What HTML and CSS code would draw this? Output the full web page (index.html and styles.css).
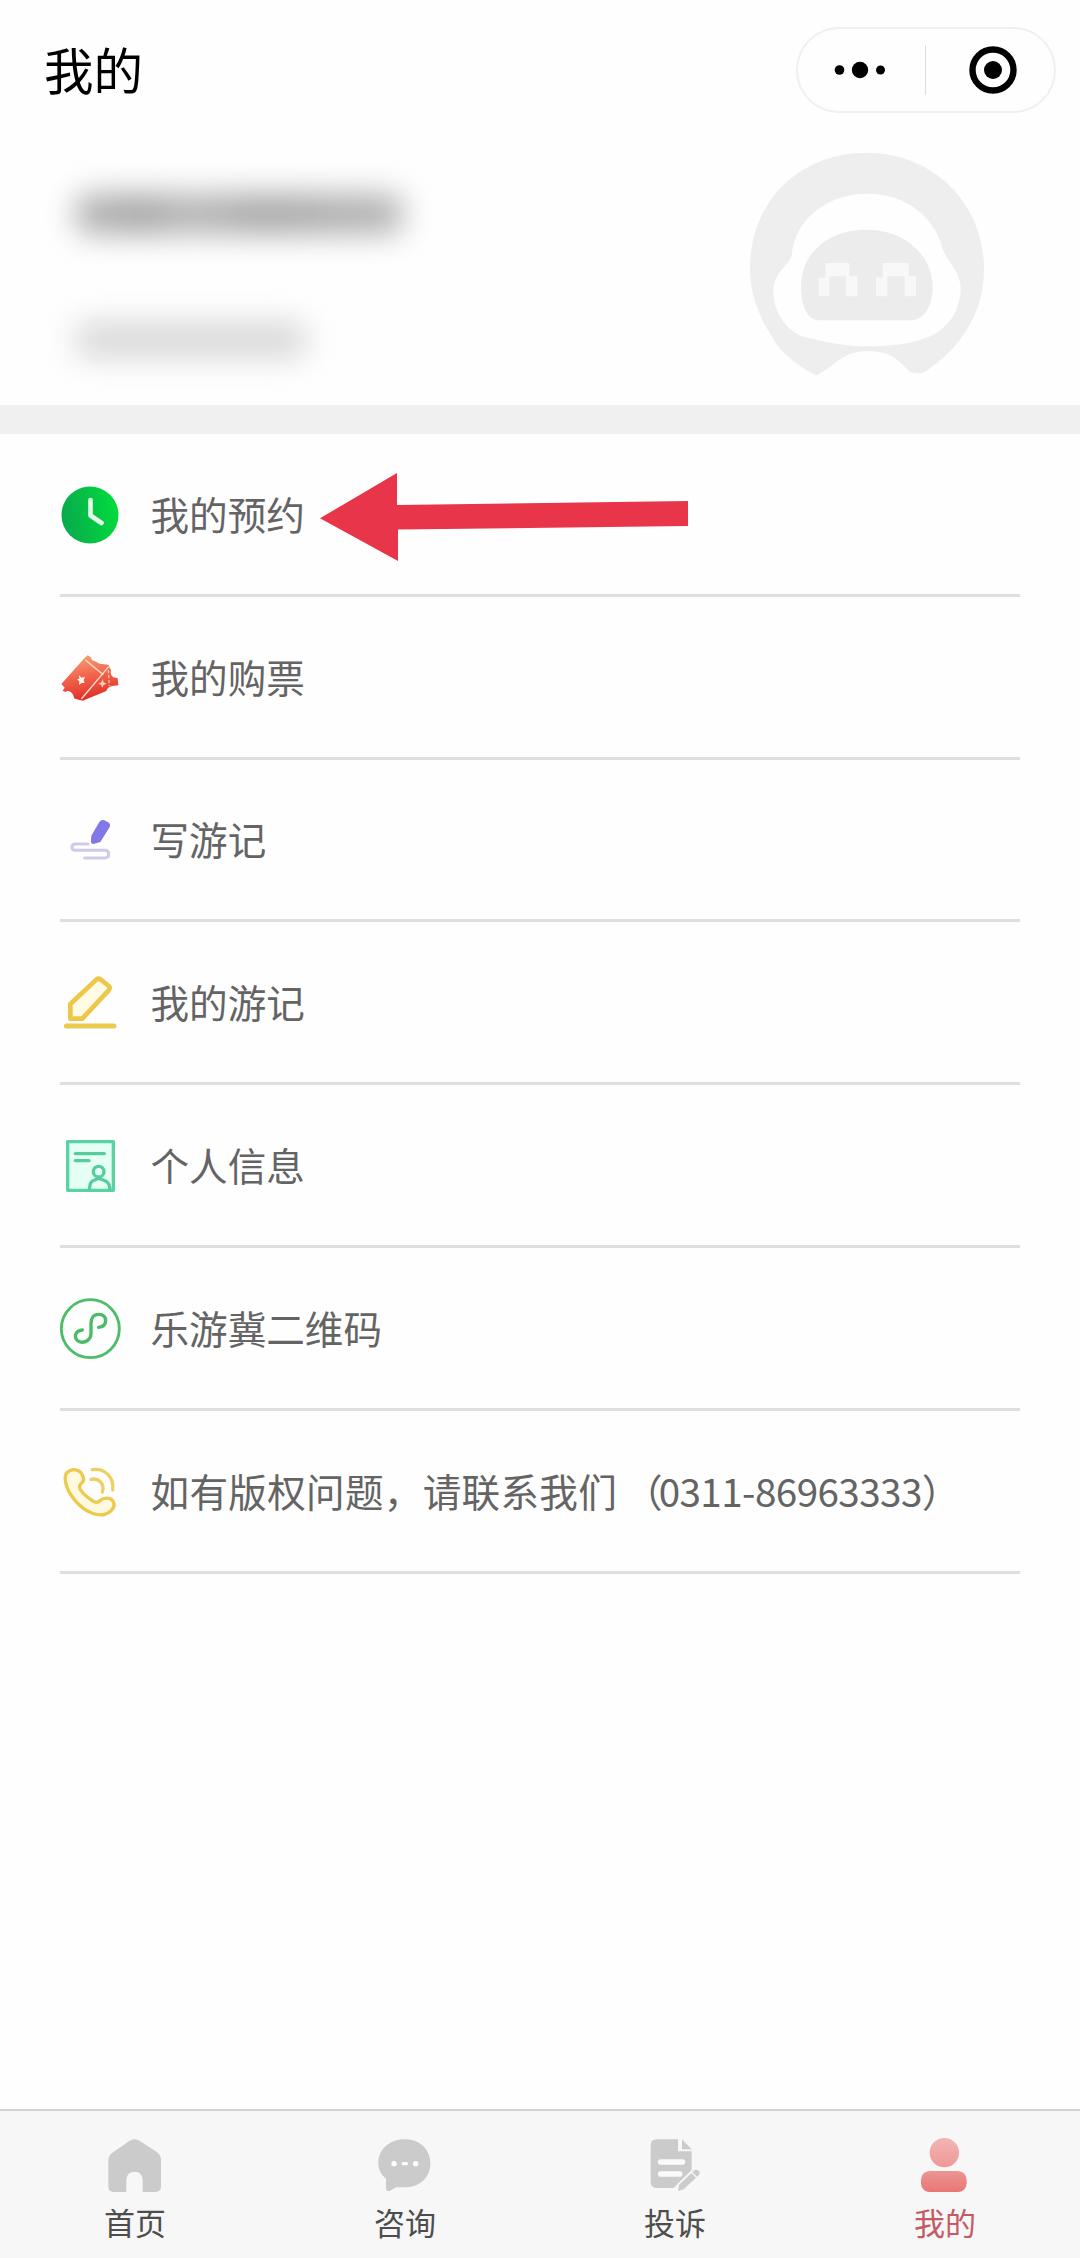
FILE: index.html
```html
<!DOCTYPE html>
<html lang="zh-CN">
<head>
<meta charset="utf-8">
<title>我的</title>
<link rel="stylesheet" href="styles.css">
</head>
<body>
<div class="page">
  <header class="topbar">
    <h1 class="title">我的</h1>
    <div class="capsule">
      <svg class="capsule-more" viewBox="0 0 60 60"><circle cx="9.5" cy="30" r="4.8"/><circle cx="30" cy="30" r="8.2"/><circle cx="50.5" cy="30" r="4.5"/></svg>
      <span class="capsule-divider"></span>
      <svg class="capsule-close" viewBox="0 0 60 60"><circle cx="30" cy="30" r="20.5" fill="none" stroke="#000" stroke-width="6.4"/><circle cx="30" cy="30" r="9"/></svg>
    </div>
  </header>

  <section class="profile">
    <div class="identity">
      <span class="redacted name"></span>
      <span class="redacted detail"></span>
    </div>
    <svg class="avatar" viewBox="90 455 702 672">
      <path fill="#eee" d="M290 1125C235 1100 175 1050 160 1015C110 940 90 870 90 805C90 600 240 457 440 457C640 457 792 610 792 805C792 930 730 1040 610 1117Q590 1121 570 1115C535 1080 515 1052 440 1052C365 1052 335 1105 290 1125Z"/>
      <path fill="#fefefe" d="M440 580C330 580 225 650 215 765C205 800 160 815 160 875C160 935 200 995 255 1010C320 1027 380 1038 440 1038C510 1038 580 1030 625 1010C690 985 722 920 722 865C722 810 675 780 665 735C640 650 560 580 440 580Z"/>
      <path fill="#ececec" d="M440 688C320 688 243 760 243 860C243 910 258 960 300 960H570C610 960 638 920 638 860C638 770 560 688 440 688Z"/>
      <path fill="#f8f8f8" d="M316 788H388V828H412V888H378V828H328V888H296V832H316ZM488 788H566V828H588V888H554V828H502V888H468V832H488Z"/>
    </svg>
  </section>

  <ul class="menu">
    <li class="row">
      <svg class="icon" viewBox="0 0 60 60">
        <defs><linearGradient id="clock" x1="0" x2="1" y1=".6" y2=".4"><stop offset="0" stop-color="#08a94d"/><stop offset="1" stop-color="#02dc3c"/></linearGradient></defs>
        <circle cx="30" cy="30" r="28.5" fill="url(#clock)"/>
        <path d="M30.5 15V30.5L41.5 38" fill="none" stroke="#e4ffe9" stroke-width="4.6" stroke-linecap="round" stroke-linejoin="round"/>
      </svg>
      <span class="label">我的预约</span>
      <svg class="arrow" viewBox="0 0 368 88"><path fill="#e93549" d="M0 45.3L77 0V32L368 28V53L78 56.5V88Z"/></svg>
    </li>
    <li class="row">
      <svg class="icon" viewBox="60 52 180 180">
        <defs><linearGradient id="ticket" x1=".3" x2=".5" y1="0" y2="1"><stop offset="0" stop-color="#f7a078"/><stop offset=".45" stop-color="#f2664c"/><stop offset="1" stop-color="#e02b26"/></linearGradient></defs>
        <path fill="url(#ticket)" d="M64 160L133 83L143 74L153 80Q154 91 164 91L179 99L205 102L213 119Q209 132 220 140L233 143L235 164L216 166Q202 169 199 181L128 210L116 207L102 203Q101 190 92 184Q84 178 76 184L68 180L74 171Z"/>
        <path d="M124 205L206 108M136 88L190 132" stroke="#ffe3ce" stroke-width="4" fill="none"/>
        <path d="M205 118L208 166" stroke="#ffc39e" stroke-width="4" stroke-dasharray="10 5" fill="none"/>
        <path fill="#fff4ea" d="M117 134L125 141L135 138L131 149L134 157L125 157L117 163L118 152L111 146L118 144Z"/>
        <path fill="#ffd0ad" d="M188 145L191 155L200 159L191 163L187 171L183 162L175 159L184 155Z"/>
      </svg>
      <span class="label">我的购票</span>
    </li>
    <li class="row">
      <svg class="icon" viewBox="60 540 180 180">
        <path fill="none" stroke="#cfcae9" stroke-width="9" stroke-linecap="round" stroke-linejoin="round" d="M144 642H106Q96 642 96 652Q96 661 106 661H194Q206 661 206 673Q206 684 194 684H134"/>
        <path fill="#8178e8" d="M178 576Q183 568 193 571L204 577Q213 582 209 591L181 636L160 642Q153 642 153 635L154 617Z"/>
      </svg>
      <span class="label">写游记</span>
    </li>
    <li class="row">
      <svg class="icon" viewBox="60 69 180 180">
        <path fill="#fffbe5" stroke="#edc747" stroke-width="14" stroke-linejoin="round" d="M91 206V162L169 89Q177 83 184 90L206 108Q212 114 206 121L127 206Z"/>
        <path stroke="#e9cb50" stroke-width="15" stroke-linecap="round" d="M79 228H222"/>
      </svg>
      <span class="label">我的游记</span>
    </li>
    <li class="row">
      <svg class="icon" viewBox="60 557 180 180">
        <path fill="#e5fff4" stroke="#59d3a2" stroke-width="10" stroke-linejoin="round" d="M83 574H220V720H83Z"/>
        <g fill="none" stroke="#56cc9d" stroke-width="10" stroke-linecap="round"><path d="M106 610H193M106 631H147"/><circle cx="176" cy="664" r="16"/><path d="M149 717V711Q149 694 164 689L176 684L190 689Q207 694 209 711V717"/></g>
      </svg>
      <span class="label">个人信息</span>
    </li>
    <li class="row">
      <svg class="icon" viewBox="60 85 180 180">
        <circle cx="151" cy="174" r="87" fill="none" stroke="#4cbd68" stroke-width="8.5"/>
        <path fill="none" stroke="#4abb67" stroke-width="10" stroke-linecap="round" d="M127 178C109 180 103 193 108 204C113 214 126 217 136 213C149 208 153 201 153 188V158C153 142 161 131 176 131C190 131 198 140 197 151C196 162 188 169 176 170"/>
      </svg>
      <span class="label">乐游冀二维码</span>
    </li>
    <li class="row">
      <svg class="icon" viewBox="60 574 180 180">
        <path fill="#fff9df" stroke="#ecca50" stroke-width="10" stroke-linejoin="round" d="M88 601C77 606 73 619 77 636C84 672 120 713 155 727C180 737 199 733 213 720C223 711 225 700 218 690C209 679 190 681 181 689Q171 700 159 691Q134 676 121 657Q115 646 125 637Q136 628 126 611C119 598 104 593 88 601Z"/>
        <path fill="none" stroke="#ecd064" stroke-width="10" stroke-linecap="round" d="M157 597C195 590 223 622 218 658M153 626C177 621 195 641 187 664"/>
      </svg>
      <span class="label contact">如有版权问题，请联系我们<span class="phone"><span class="paren">（</span>0311-86963333）</span></span>
    </li>
  </ul>

  <nav class="tabbar">
    <a class="tab">
      <svg class="icon" viewBox="135 105 180 180"><path fill="#cbcbcb" d="M207 121Q224 108 241 121L291 154Q303 163 303 178V256Q303 273 287 273H248V236Q246 212 224 212Q201 212 199 236V273H160Q145 273 145 256V178Q145 164 157 155Z"/></svg>
      <span>首页</span>
    </a>
    <a class="tab">
      <svg class="icon" viewBox="945 105 180 180"><path fill="#cbcbcb" d="M1034 115C1080 115 1111 145 1111 187C1111 229 1080 259 1036 259H1008L989 270Q978 272 978 261V233C962 220 955 205 955 187C955 145 988 115 1034 115Z"/><g fill="#fff"><circle cx="1002" cy="188" r="8"/><rect x="1025" y="183" width="19" height="10" rx="5"/><circle cx="1067" cy="188" r="8"/></g></svg>
      <span>咨询</span>
    </a>
    <a class="tab">
      <svg class="icon" viewBox="135 105 180 180"><path fill="#cbcbcb" d="M171 115H234V151H275V207L221 261H171Q152 261 152 242V134Q152 115 171 115ZM246 115L275 145H246Z"/><path stroke="#fafafa" stroke-width="17" stroke-linecap="round" d="M182 183H247M182 219H239"/><path fill="#cbcbcb" stroke="#f7f7f7" stroke-width="5" d="M235 250L282 205Q291 201 300 209Q305 216 298 224L252 267L231 274Z"/><path d="M273 213L291 230" stroke="#f7f7f7" stroke-width="4"/></svg>
      <span>投诉</span>
    </a>
    <a class="tab active">
      <svg class="icon" viewBox="945 105 180 180">
        <defs><linearGradient id="head" x1="0" x2="0" y1="0" y2="1"><stop offset="0" stop-color="#f3b5b3"/><stop offset="1" stop-color="#ed9997"/></linearGradient><linearGradient id="torso" x1="0" x2="0" y1="0" y2="1"><stop offset="0" stop-color="#eb9692"/><stop offset="1" stop-color="#e97677"/></linearGradient></defs>
        <circle cx="1033" cy="155" r="44" fill="url(#head)"/><rect x="963" y="210" width="137" height="63" rx="26" fill="url(#torso)"/>
      </svg>
      <span>我的</span>
    </a>
  </nav>
</div>
</body>
</html>
```

FILE: styles.css
```css
* { box-sizing: border-box; }

body {
  margin: 0;
  background: #fefefe;
  font-family: "Noto Sans CJK SC", sans-serif;
  color: #646464;
}

.page {
  display: flex;
  flex-direction: column;
  width: 1080px;
  height: 2258px;
  overflow: hidden;
}

.topbar {
  display: flex;
  align-items: center;
  justify-content: space-between;
  height: 140px;
  padding: 0 24px 0 44px;
}

.title {
  margin: 0;
  padding-bottom: 3px;
  font-size: 49.5px;
  font-weight: 400;
  line-height: 70px;
  color: #000;
}

.capsule {
  display: flex;
  align-items: center;
  width: 260px;
  height: 86px;
  border: 2px solid #f0f0f0;
  border-radius: 43px;
}

.capsule-more { width: 60px; height: 60px; margin-left: 32px; }
.capsule-divider { width: 1px; height: 50px; margin-left: 35px; background: #ddd; }
.capsule-close { width: 60px; height: 60px; margin-left: 37px; }

.profile {
  display: flex;
  justify-content: space-between;
  height: 294px;
  padding: 12px 96px 0 75px;
  border-bottom: 29px solid #f0f0f0;
}

.identity {
  display: flex;
  flex-direction: column;
  gap: 88px;
  padding-top: 42px;
}

.redacted { display: block; border-radius: 14px; filter: blur(15px); }
.name { width: 328px; height: 40px; background: linear-gradient(90deg, #b4b4b4, #a4a4a4 20%, #b5b5b5 35%, #a6a6a6 57%, #b4b4b4); }
.detail { width: 232px; height: 36px; background: #d8d8d8; }

.avatar { width: 234px; height: 224px; }

.menu {
  flex: 1;
  margin: 0;
  padding: 0 60px;
  list-style: none;
}

.row {
  position: relative;
  display: flex;
  align-items: center;
  gap: 30.5px;
  height: 162.8px;
  padding-top: 2px;
  border-bottom: 3px solid #dfdfdf;
}

.icon { display: block; flex: none; width: 60px; height: 60px; overflow: visible; }

.label {
  padding-bottom: 4px;
  font-size: 38.6px;
  line-height: 56px;
  white-space: nowrap;
}

.contact { letter-spacing: 0.3px; }
.phone { margin-left: 7px; letter-spacing: -0.55px; }
.paren { letter-spacing: -4px; }

/* Callout pointing at the reservations entry */
.arrow {
  position: absolute;
  left: 260px;
  top: 39px;
  width: 368px;
  height: 88px;
}

.tabbar {
  display: grid;
  grid-template-columns: repeat(4, 1fr);
  height: 149px;
  border-top: 2px solid #d3d3d3;
  background: #f7f7f7;
}

.tab {
  display: flex;
  flex-direction: column;
  align-items: center;
  padding-top: 25px;
  gap: 4px;
  font-size: 31px;
  line-height: 44px;
  color: #4d4d4d;
}

.active { color: #c65a64; }
```
